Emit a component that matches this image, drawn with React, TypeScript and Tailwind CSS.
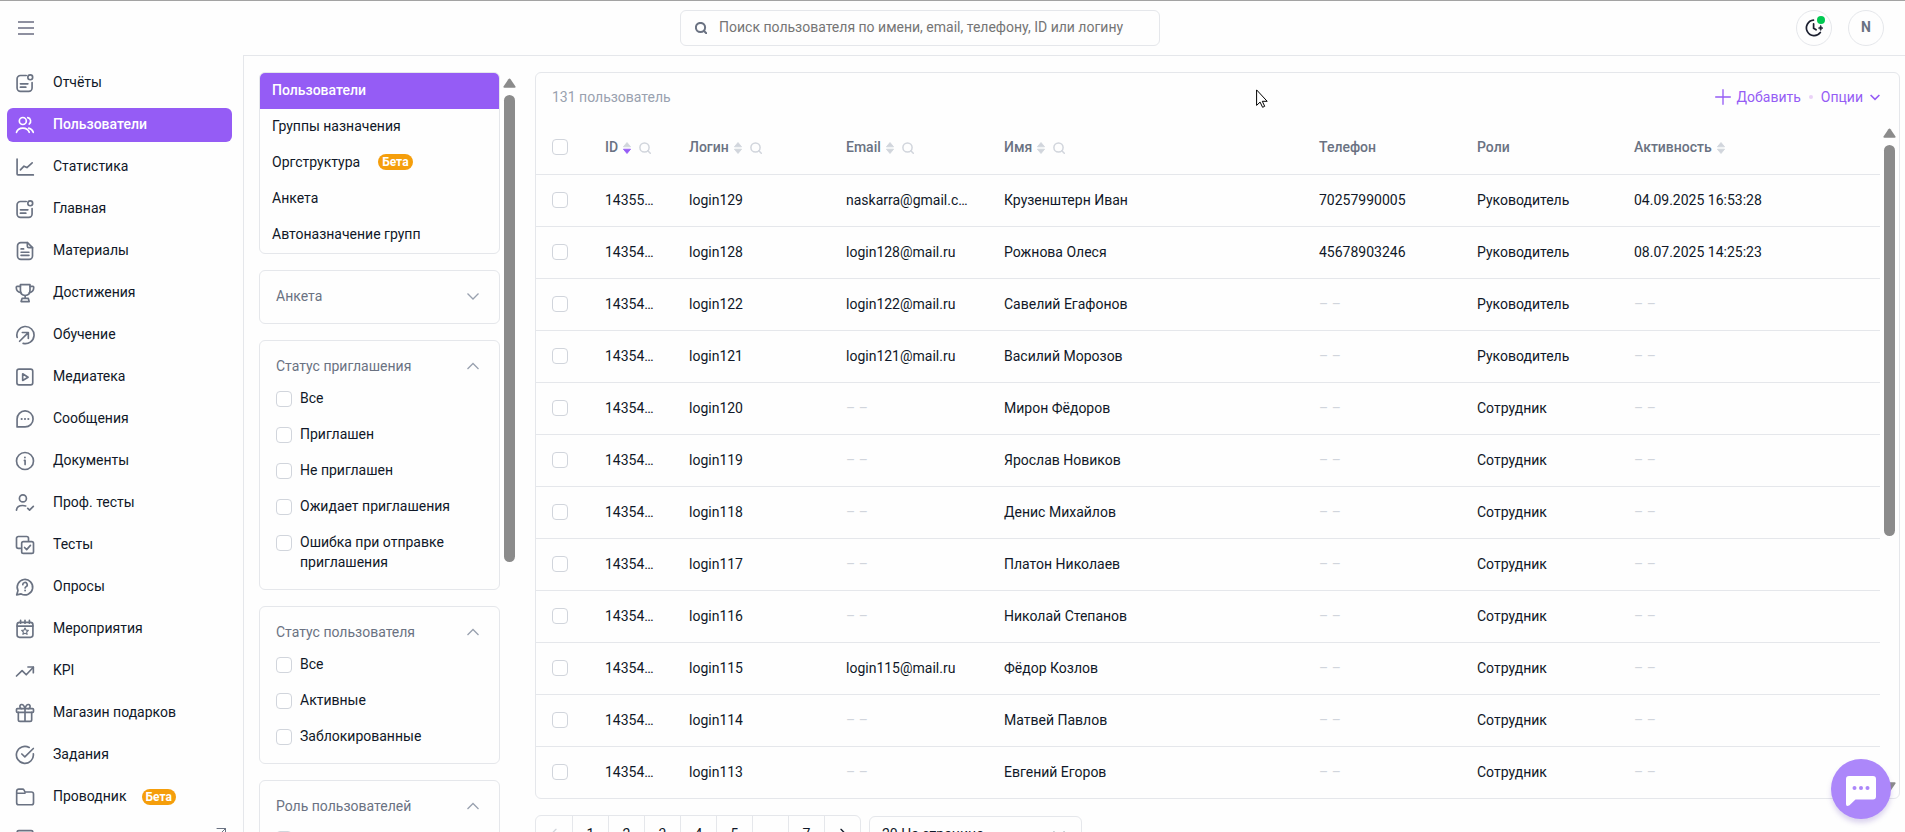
import type { ReactNode } from "react";

type IconProps = { children: ReactNode; className?: string };

function Icon({ children, className = "size-5 shrink-0" }: IconProps) {
  return (
    <svg
      viewBox="0 0 24 24"
      fill="none"
      stroke="currentColor"
      strokeWidth="2"
      strokeLinecap="round"
      strokeLinejoin="round"
      className={className}
      aria-hidden="true"
    >
      {children}
    </svg>
  );
}

const icons = {
  report: (
    <>
      <path d="M13.5 3H6.5A4 4 0 0 0 2.500 7v11a4 4 0 0 0 4 4h10a4 4 0 0 0 4-4v-6.500" />
      <circle cx="18.300" cy="5.200" r="2.900" />
      <path d="M6.500 13h9M6.500 17h6.500" />
    </>
  ),
  users: (
    <>
      <circle cx="9.400" cy="7.200" r="4.200" />
      <path d="M15.300 3.200a4.300 4.300 0 0 1 1.700 7.700" />
      <path d="M1.800 20.800c1-3.300 3.900-5.100 7.600-5.100s6.600 1.800 7.700 5.100" />
      <path d="M16.500 15.700c2.600.6 4.500 2.200 5.400 5.100" />
    </>
  ),
  chart: (
    <>
      <path d="M2.500 2.500v18a1 1 0 0 0 1 1H22" />
      <path d="M6.500 15.500l4.300-4.500 3.500 1.700 6.300-5.600" />
    </>
  ),
  file: (
    <>
      <path d="M15 2H7a4 4 0 0 0-4 4v12a4 4 0 0 0 4 4h10a4 4 0 0 0 4-4V8z" />
      <path d="M14.800 2v4.200A1.800 1.800 0 0 0 16.600 8H21" />
      <path d="M7.300 9.500h3M7.300 13.500h9.400M7.300 17.300h9.400" />
    </>
  ),
  trophy: (
    <>
      <path d="M6.500 2h11.500v6.500c0 4-2.300 6.500-5.750 6.500S6.500 12.500 6.500 8.500z" />
      <path d="M6.500 4H2.500c-1 0-1 .6-1 1.500C1.600 8.800 3 11 7 11.500M18 4h3.500c1 0 1 .6 1 1.500-.1 3.300-1.500 5.500-5.200 6" />
      <path d="M12.200 15v3.500M8.500 18.500h7.500l1 3.800H7.300z" />
    </>
  ),
  learn: (
    <>
      <path d="M2.600 14.800A10.300 10.300 0 1 1 9.800 22" />
      <path d="M5.500 19.500L15 10M8.800 9H16v7.200" />
    </>
  ),
  media: (
    <>
      <rect x="2.300" y="2.500" width="19" height="19" rx="2.500" />
      <path d="M9.200 8.200v8l6.500-4z" />
    </>
  ),
  message: (
    <>
      <path d="M2.500 21.500V12a9.600 9.600 0 1 1 9.600 9.500z" />
      <path d="M8 12h.01M12 12h.01M16 12h.01" strokeWidth="2.600" />
    </>
  ),
  info: (
    <>
      <circle cx="12" cy="12" r="10.200" />
      <path d="M11.300 11.300h.8v5" />
      <path d="M11.900 7.800h.01" strokeWidth="2.200" />
    </>
  ),
  userCheck: (
    <>
      <circle cx="9.500" cy="6.500" r="4.200" />
      <path d="M1.800 20.500c.3-3.600 3-5.500 7.500-5.500 1.300 0 2.500.1 3.500.5" />
      <path d="M15.300 18.500l2.200 2 4.500-4.500" />
    </>
  ),
  tests: (
    <>
      <rect x="8" y="8" width="14.200" height="14" rx="2" />
      <path d="M6.500 16H4a2.200 2.200 0 0 1-2.200-2.200V4A2.200 2.200 0 0 1 4 1.800h10A2.200 2.200 0 0 1 16.200 4v2.500" />
      <path d="M11.500 15l2.500 2.500 4.500-5" />
    </>
  ),
  survey: (
    <>
      <path d="M2 21.500l1.600-5.200a9.300 9.300 0 1 1 3.800 4z" />
      <path d="M9.300 9.300a2.700 2.700 0 1 1 4 2.300c-.8.500-1.200.9-1.200 1.700" />
      <path d="M12.100 16.200h.01" strokeWidth="2.200" />
    </>
  ),
  calendar: (
    <>
      <rect x="2.500" y="4" width="19" height="18" rx="3" />
      <path d="M2.500 8.500h19M6.700 1.500V5M12 1.500V5M17.300 1.500V5" />
      <path d="M12 10.800l1.200 2.500 2.800.4-2 1.900.5 2.800-2.500-1.300-2.500 1.300.5-2.800-2-1.900 2.800-.4z" strokeWidth="1.400" />
    </>
  ),
  trend: (
    <>
      <path d="M1.800 18l6.700-6.500 5 5L22 7.500" />
      <path d="M15.500 7.200H22V14" />
    </>
  ),
  gift: (
    <>
      <rect x="1.800" y="6.800" width="20.400" height="4.500" rx="1" />
      <path d="M4 11.300V20a2 2 0 0 0 2 2h12a2 2 0 0 0 2-2v-8.700M12 6.800V22" />
      <path d="M12 6.800C11 3 9.500 1.600 7.800 1.800 5 2.200 5.500 6.800 8 6.800M12 6.800c1-3.800 2.500-5.200 4.200-5 2.800.4 2.300 5-.2 5" />
    </>
  ),
  task: (
    <>
      <path d="M22 10.500A10.200 10.200 0 1 1 17 3" />
      <path d="M8.200 10.800l3.600 3.400L22 4.200" />
    </>
  ),
  folder: (
    <path d="M2 8V5a2.500 2.500 0 0 1 2.500-2.500H9A2 2 0 0 1 10.800 3.600L12 6H19.700A2.500 2.500 0 0 1 22.200 8.500v10.300a2.500 2.500 0 0 1-2.500 2.500H4.500A2.500 2.500 0 0 1 2 18.800zM2 7.500h10" />
  ),
  book: <rect x="2.500" y="2" width="19" height="20" rx="2" />,
};

type NavEntry = { label: string; icon: keyof typeof icons; active?: boolean; beta?: boolean };

const navigation: NavEntry[] = [
  { label: "Отчёты", icon: "report" },
  { label: "Пользователи", icon: "users", active: true },
  { label: "Статистика", icon: "chart" },
  { label: "Главная", icon: "report" },
  { label: "Материалы", icon: "file" },
  { label: "Достижения", icon: "trophy" },
  { label: "Обучение", icon: "learn" },
  { label: "Медиатека", icon: "media" },
  { label: "Сообщения", icon: "message" },
  { label: "Документы", icon: "info" },
  { label: "Проф. тесты", icon: "userCheck" },
  { label: "Тесты", icon: "tests" },
  { label: "Опросы", icon: "survey" },
  { label: "Мероприятия", icon: "calendar" },
  { label: "KPI", icon: "trend" },
  { label: "Магазин подарков", icon: "gift" },
  { label: "Задания", icon: "task" },
  { label: "Проводник", icon: "folder", beta: true },
];

const sections = [
  { label: "Пользователи", active: true },
  { label: "Группы назначения" },
  { label: "Оргструктура", beta: true },
  { label: "Анкета" },
  { label: "Автоназначение групп" },
];

const filters = [
  { title: "Анкета", options: [] },
  {
    title: "Статус приглашения",
    options: ["Все", "Приглашен", "Не приглашен", "Ожидает приглашения", "Ошибка при отправке приглашения"],
  },
  { title: "Статус пользователя", options: ["Все", "Активные", "Заблокированные"] },
  { title: "Роль пользователей", options: ["Все"] },
];

const none = "– –";

const users = [
  ["14355…", "login129", "naskarra@gmail.c…", "Крузенштерн Иван", "70257990005", "Руководитель", "04.09.2025 16:53:28"],
  ["14354…", "login128", "login128@mail.ru", "Рожнова Олеся", "45678903246", "Руководитель", "08.07.2025 14:25:23"],
  ["14354…", "login122", "login122@mail.ru", "Савелий Егафонов", none, "Руководитель", none],
  ["14354…", "login121", "login121@mail.ru", "Василий Морозов", none, "Руководитель", none],
  ["14354…", "login120", none, "Мирон Фёдоров", none, "Сотрудник", none],
  ["14354…", "login119", none, "Ярослав Новиков", none, "Сотрудник", none],
  ["14354…", "login118", none, "Денис Михайлов", none, "Сотрудник", none],
  ["14354…", "login117", none, "Платон Николаев", none, "Сотрудник", none],
  ["14354…", "login116", none, "Николай Степанов", none, "Сотрудник", none],
  ["14354…", "login115", "login115@mail.ru", "Фёдор Козлов", none, "Сотрудник", none],
  ["14354…", "login114", none, "Матвей Павлов", none, "Сотрудник", none],
  ["14354…", "login113", none, "Евгений Егоров", none, "Сотрудник", none],
];

const columns = [
  { title: "ID", sort: "desc", search: true },
  { title: "Логин", sort: "none", search: true },
  { title: "Email", sort: "none", search: true },
  { title: "Имя", sort: "none", search: true },
  { title: "Телефон" },
  { title: "Роли" },
  { title: "Активность", sort: "none" },
];

const checkboxClass =
  "block size-4 shrink-0 appearance-none rounded border border-gray-300 bg-white checked:border-[#955cf5] checked:bg-[#955cf5]";

function Beta() {
  return (
    <span className="flex h-4 items-center rounded-full bg-[#f59e0b] px-1 text-xs font-bold text-white">Бета</span>
  );
}

function Chevron({ up = false, className }: { up?: boolean; className: string }) {
  return (
    <svg viewBox="0 0 20 20" fill="none" stroke="currentColor" strokeWidth="1.300" className={className} aria-hidden="true">
      <path d={up ? "M4.500 13l5.500-5.500L15.500 13" : "M4.500 7.500L10 13l5.500-5.500"} />
    </svg>
  );
}

function ScrollArrow({ down = false }: { down?: boolean }) {
  return (
    <svg viewBox="0 0 13 10" className="h-[10px] w-[13px] shrink-0 fill-[#8b8b8b]" aria-hidden="true">
      <path
        d={
          down
            ? "M.5 1.600Q0 .3 1.400.3h10.200q1.400 0 .9 1.300L7.600 8.800q-1.100 1.400-2.200 0z"
            : "M.5 8.400Q0 9.700 1.400 9.700h10.200q1.400 0 .9-1.300L7.600 1.200q-1.100-1.400-2.200 0z"
        }
      />
    </svg>
  );
}

function SortMark({ active }: { active: boolean }) {
  return (
    <svg viewBox="0 0 8 12" className="h-3 w-2" aria-hidden="true">
      <path d="M4 .5l3.600 4.300H.4z" className="fill-gray-300 stroke-gray-300" strokeWidth=".8" strokeLinejoin="round" />
      <path
        d="M4 11.500l3.600-4.300H.4z"
        className={active ? "fill-[#955cf5] stroke-[#955cf5]" : "fill-gray-300 stroke-gray-300"}
        strokeWidth=".8"
        strokeLinejoin="round"
      />
    </svg>
  );
}

function SearchMark({ className }: { className: string }) {
  return (
    <svg viewBox="0 0 12 12" fill="none" stroke="currentColor" strokeLinecap="round" className={className} aria-hidden="true">
      <circle cx="5.500" cy="5.500" r="4.600" />
      <path d="M8.800 8.800l2.500 2.500" />
    </svg>
  );
}

function Header() {
  return (
    <header className="flex h-[54px] shrink-0 items-center justify-between pr-[21px] pl-[18px]">
      <button type="button" aria-label="Меню" className="flex h-9 w-[26px] flex-col justify-center gap-1">
        <span className="h-0.5 w-4 bg-[#8e90a0]" />
        <span className="h-0.5 w-4 bg-[#8e90a0]" />
        <span className="h-0.5 w-4 bg-[#8e90a0]" />
      </button>
      <label className="flex h-9 w-[480px] items-center rounded-md border border-gray-200 pl-[14px]">
        <SearchMark className="size-3 stroke-2 text-gray-500" />
        <input
          type="search"
          aria-label="Поиск пользователя"
          placeholder="Поиск пользователя по имени, email, телефону, ID или логину"
          className="ml-3 min-w-0 flex-1 bg-transparent pb-0.5 text-sm outline-none placeholder:text-[#757575]"
        />
      </label>
      <div className="flex gap-4">
        <button
          type="button"
          aria-label="История"
          className="relative flex size-9 items-center justify-center rounded-full border border-gray-200 text-[#1c2030]"
        >
          <svg viewBox="0 0 18 18" fill="none" stroke="currentColor" strokeWidth="1.700" strokeLinecap="round" className="size-[18px]" aria-hidden="true">
            <path d="M8.500 1.200A7.700 7.700 0 1 0 15.300 13.500" />
            <path d="M8.600 4.800v4.400l2.500 1.600" />
            <path d="M15.700 6.600q.4 2.200 2.400 2.500-2 .3-2.400 2.500-.4-2.200-2.400-2.500 2-.3 2.400-2.500z" fill="currentColor" strokeWidth=".6" />
          </svg>
          <span className="absolute top-[5px] right-1.5 size-2 rounded-full bg-green-500" />
        </button>
        <button
          type="button"
          aria-label="Профиль N"
          className="flex size-9 items-center justify-center rounded-full border border-gray-200 pb-0.5 text-sm font-bold text-gray-500"
        >
          N
        </button>
      </div>
    </header>
  );
}

function Sidebar() {
  return (
    <nav className="flex w-[243px] shrink-0 flex-col gap-2 pt-[11px] pr-[11px] pl-[7px]">
      {navigation.map((item) => (
        <a
          key={item.label}
          href="#"
          className={
            item.active
              ? "flex h-[34px] shrink-0 items-center rounded-md bg-[#955cf5] pl-2 text-white"
              : "flex h-[34px] shrink-0 items-center pl-2 text-gray-500"
          }
        >
          <Icon>{icons[item.icon]}</Icon>
          <span className={item.active ? "ml-[18px] pb-0.5 font-medium" : "ml-[18px] pb-0.5 text-gray-900"}>{item.label}</span>
          {item.beta && (
            <span className="ml-[15px]">
              <Beta />
            </span>
          )}
        </a>
      ))}
      <a href="#" aria-label="База знаний" className="flex h-[34px] shrink-0 items-center justify-between pr-[5px] pl-2 text-gray-500">
        <Icon>{icons.book}</Icon>
        <Icon className="mb-3 size-3">
          <path d="M4 3h17v17M21 3L5 19" />
        </Icon>
      </a>
    </nav>
  );
}

function FilterPanel() {
  return (
    <aside className="flex shrink-0 gap-[3px]">
      <div className="flex w-[241px] flex-col gap-4">
        <nav className="shrink-0 overflow-hidden rounded-md border border-gray-200">
          {sections.map((item) => (
            <a
              key={item.label}
              href="#"
              className={
                item.active
                  ? "flex h-9 items-center bg-[#955cf5] pb-0.5 pl-3 font-medium text-white"
                  : "flex h-9 items-center pb-0.5 pl-3"
              }
            >
              {item.label}
              {item.beta && (
                <span className="ml-[18px]">
                  <Beta />
                </span>
              )}
            </a>
          ))}
        </nav>
        {filters.map((group) => (
          <fieldset key={group.title} className="shrink-0 rounded-md border border-gray-200 px-4 pt-[15px] pb-[17px]">
            <button type="button" className="flex w-full items-center justify-between text-gray-500">
              {group.title}
              <Chevron up={group.options.length > 0} className="size-5 text-gray-400" />
            </button>
            {group.options.length > 0 && (
              <div className="mt-3 flex flex-col gap-4">
                {group.options.map((option) => (
                  <label key={option} className="flex items-start gap-2">
                    <input type="checkbox" className={`mt-[3px] ${checkboxClass}`} />
                    {option}
                  </label>
                ))}
              </div>
            )}
          </fieldset>
        ))}
      </div>
      <div className="flex w-[13px] flex-col items-center gap-[7px] pt-1.5">
        <ScrollArrow />
        <div className="h-[467px] w-[11px] shrink-0 rounded-full bg-[#8b8b8b]" />
      </div>
    </aside>
  );
}

function UserTable() {
  return (
    <section className="rounded-md border border-gray-200">
      <div className="flex h-[47px] items-center justify-between pr-4 pl-4">
        <span className="text-gray-400">131 пользователь</span>
        <div className="flex items-center gap-2 text-[#955cf5]">
          <button type="button" className="flex items-center gap-1.5">
            <Icon className="size-4">
              <path d="M12 1v22M1 12h22" />
            </Icon>
            Добавить
          </button>
          <span className="size-1 rounded-full bg-[#ead2f7]" />
          <button type="button" className="flex items-center gap-1">
            Опции
            <Chevron className="size-4 stroke-2" />
          </button>
        </div>
      </div>
      <div className="flex">
        <table className="min-w-0 flex-1 table-fixed border-separate border-spacing-0">
          <colgroup>
            <col className="w-[53px]" />
            <col className="w-[84px]" />
            <col className="w-[157px]" />
            <col className="w-[158px]" />
            <col />
            <col className="w-[158px]" />
            <col className="w-[157px]" />
            <col className="w-[262px]" />
          </colgroup>
          <thead>
            <tr className="h-[55px]">
              <th className="border-b border-gray-200 pl-4">
                <input type="checkbox" aria-label="Выбрать всех" className={checkboxClass} />
              </th>
              {columns.map((column) => (
                <th key={column.title} className="border-b border-gray-200 pl-4 font-medium text-gray-500">
                  <span className="flex items-center">
                    {column.title}
                    {column.sort && (
                      <button type="button" aria-label={`Сортировать: ${column.title}`} className="ml-[5px] pt-0.5">
                        <SortMark active={column.sort === "desc"} />
                      </button>
                    )}
                    {column.search && (
                      <button type="button" aria-label={`Искать: ${column.title}`} className="ml-2 pt-0.5">
                        <SearchMark className="size-3 stroke-[1.5] text-gray-300" />
                      </button>
                    )}
                  </span>
                </th>
              ))}
            </tr>
          </thead>
          <tbody className="[&>tr:last-child>td]:border-b-0">
            {users.map((row) => (
              <tr key={row[1]} className="h-[52px] last:h-[51px]">
                <td className="border-b border-gray-200 pb-0.5 pl-4">
                  <input type="checkbox" aria-label={`Выбрать ${row[1]}`} className={checkboxClass} />
                </td>
                {row.map((cell, index) => (
                  <td
                    key={index}
                    className={
                      cell === none
                        ? "border-b border-gray-200 pb-0.5 pl-4 text-gray-300"
                        : "border-b border-gray-200 pb-0.5 pl-4 whitespace-nowrap"
                    }
                  >
                    {cell}
                  </td>
                ))}
              </tr>
            ))}
          </tbody>
        </table>
        <div className="flex w-[19px] shrink-0 flex-col items-center gap-[7px] pt-2 pb-1.5">
          <ScrollArrow />
          <div className="min-h-0 w-full flex-1">
            <div className="mx-auto h-[62%] w-[11px] rounded-full bg-[#8b8b8b]" />
          </div>
          <ScrollArrow down />
        </div>
      </div>
    </section>
  );
}

function Pagination() {
  const cell = "flex h-9 w-9 items-center justify-center border-l border-gray-200 first:border-l-0";
  return (
    <div className="mt-4 flex items-start gap-2">
      <nav aria-label="Страницы" className="flex rounded-md border border-gray-200">
        <button type="button" aria-label="Назад" className={`${cell} text-gray-300`}>
          <Icon className="size-4">
            <path d="M15 5l-7 7 7 7" />
          </Icon>
        </button>
        {["1", "2", "3", "4", "5", "…", "7"].map((page) => (
          <button key={page} type="button" className={cell}>
            {page}
          </button>
        ))}
        <button type="button" aria-label="Вперёд" className={cell}>
          <Icon className="size-4">
            <path d="M9 5l7 7-7 7" />
          </Icon>
        </button>
      </nav>
      <div className="mt-px flex h-9 w-[213px] items-center rounded-md border border-gray-200 pr-3 pl-3">
        <select aria-label="Записей на странице" className="min-w-0 flex-1 appearance-none bg-transparent outline-none">
          <option>20 На странице</option>
        </select>
        <Chevron className="size-5 text-gray-400" />
      </div>
    </div>
  );
}

export default function App() {
  return (
    <div className="relative flex h-screen flex-col overflow-hidden border-t border-[#a3a3a3] bg-[#fefefe] font-[Roboto,sans-serif] text-sm text-gray-900">
      <Header />
      <div className="flex min-h-0 flex-1">
        <Sidebar />
        <main className="flex min-w-0 flex-1 gap-[19px] overflow-hidden border-t border-l border-gray-200 pt-4 pr-[5px] pl-[15px]">
          <FilterPanel />
          <div className="min-w-0 flex-1">
            <UserTable />
            <Pagination />
          </div>
        </main>
      </div>
      <button
        type="button"
        aria-label="Открыть чат"
        className="absolute right-[14px] bottom-[13px] flex size-[60px] items-center justify-center rounded-full bg-[#ac87fa] shadow-[0_4px_5px_rgba(120,90,190,0.25)]"
      >
        <svg viewBox="0 0 30 30" className="mt-1 size-[30px]" aria-hidden="true">
          <path d="M3 0h24a3 3 0 0 1 3 3v17.500a3 3 0 0 1-3 3H9.500L3.500 29.200Q0 31 0 28V3a3 3 0 0 1 3-3z" fill="white" />
          <g fill="#ac87fa">
            <circle cx="8.500" cy="12" r="2" />
            <circle cx="15" cy="12" r="2" />
            <circle cx="21.500" cy="12" r="2" />
          </g>
        </svg>
      </button>
      <svg viewBox="0 0 12 19" className="pointer-events-none absolute top-[88px] left-[1256px] h-[19px] w-3" aria-hidden="true">
        <path
          d="M.6.900v15.500l3.500-3.300 2.500 5.200 2.100-1-2.400-5h4.900z"
          fill="white"
          stroke="black"
          strokeWidth="1"
        />
      </svg>
    </div>
  );
}
